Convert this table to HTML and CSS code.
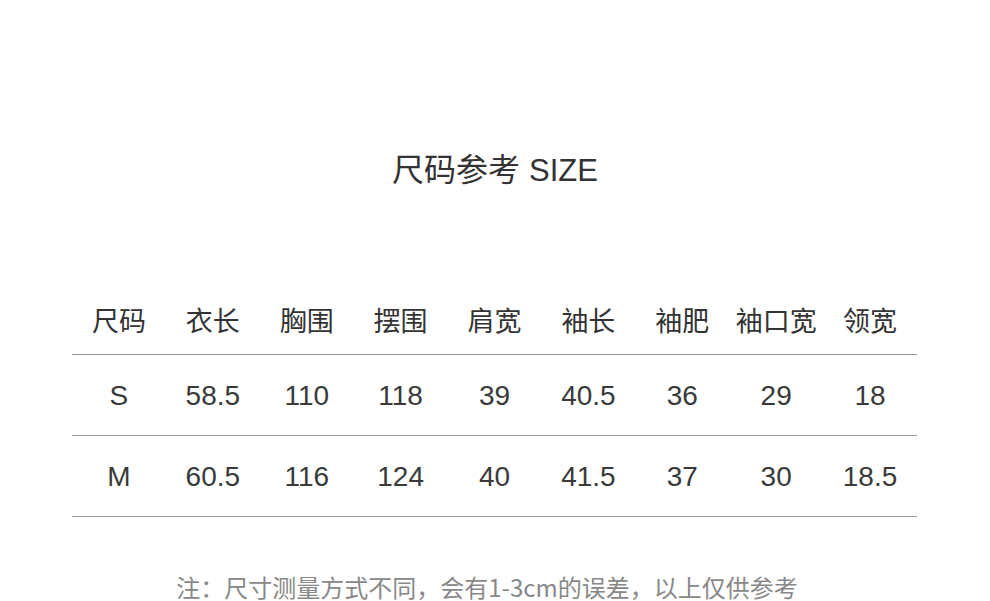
FILE: index.html
```html
<!DOCTYPE html>
<html lang="zh">
<head>
<meta charset="utf-8">
<title>尺码参考 SIZE</title>
<link rel="stylesheet" href="styles.css">
</head>
<body>
<h1 class="title"><span class="cjk">尺码参考</span> <span class="latin">SIZE</span></h1>
<div class="table">
  <div class="row head">
    <div>尺码</div><div>衣长</div><div>胸围</div><div>摆围</div><div>肩宽</div><div>袖长</div><div>袖肥</div><div>袖口宽</div><div>领宽</div>
  </div>
  <div class="row data">
    <div>S</div><div>58.5</div><div>110</div><div>118</div><div>39</div><div>40.5</div><div>36</div><div>29</div><div>18</div>
  </div>
  <div class="row data">
    <div>M</div><div>60.5</div><div>116</div><div>124</div><div>40</div><div>41.5</div><div>37</div><div>30</div><div>18.5</div>
  </div>
</div>
<p class="note">注：尺寸测量方式不同，会有1-3cm的误差，以上仅供参考</p>
</body>
</html>
```
FILE: styles.css
```css
html, body {
  margin: 0;
  padding: 0;
  background: #fff;
}
body {
  padding-top: 147px;
  color: #333;
  font-family: "Liberation Sans", "Noto Sans CJK SC", sans-serif;
  overflow: hidden;
}
.title {
  margin: 0;
  height: 40px;
  line-height: 40px;
  text-align: center;
  font-weight: normal;
  font-size: 32px;
  color: #333;
}
.title .cjk {
  font-family: "Noto Sans CJK SC", sans-serif;
  font-weight: 400;
}
.title .latin {
  font-family: "Liberation Sans", sans-serif;
  font-size: 31px;
}
.table {
  width: 845px;
  margin: 100px 0 0 72px;
}
.row {
  display: grid;
  grid-template-columns: repeat(9, 1fr);
  border-bottom: 1px solid #999;
  text-align: center;
  box-sizing: content-box;
}
.row.head {
  height: 66px;
  padding-bottom: 1px;
  align-items: center;
  font-family: "Noto Sans CJK SC", sans-serif;
  font-size: 27px;
  line-height: 36px;
}
.row.data {
  height: 79px;
  padding-top: 1px;
  align-items: center;
  font-size: 28px;
  line-height: 36px;
  color: #3a3a3a;
}
.note {
  margin: 55px 0 0;
  padding-right: 16px;
  text-align: center;
  font-family: "Noto Sans CJK SC", sans-serif;
  font-size: 24px;
  line-height: 30px;
  color: #888;
}
```
